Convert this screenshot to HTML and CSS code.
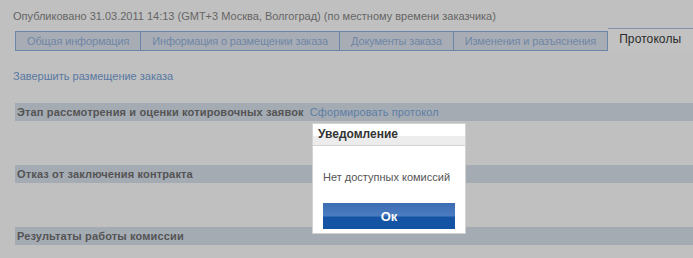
FILE: index.html
```html
<!DOCTYPE html>
<html lang="ru">
<head>
<meta charset="utf-8">
<link rel="stylesheet" href="styles.css">
</head>
<body>
<div class="page">
  <div class="published">Опубликовано 31.03.2011 14:13 (GMT+3 Москва, Волгоград) (по местному времени заказчика)</div>
  <div class="tabs">
    <span class="tab">Общая информация</span>
    <span class="tab">Информация о размещении заказа</span>
    <span class="tab">Документы заказа</span>
    <span class="tab">Изменения и разъяснения</span>
    <span class="tab active">Протоколы</span>
  </div>
  <a class="finish">Завершить размещение заказа</a>
  <div class="section">
    <div class="bar"><b>Этап рассмотрения и оценки котировочных заявок</b> <a class="barlink">Сформировать протокол</a></div>
  </div>
  <div class="section">
    <div class="bar"><b>Отказ от заключения контракта</b></div>
  </div>
  <div class="section last">
    <div class="bar"><b>Результаты работы комиссии</b></div>
  </div>
</div>
<div class="dialog">
  <div class="dlg-head">Уведомление</div>
  <div class="dlg-body">
    <div class="dlg-msg">Нет доступных комиссий</div>
    <div class="dlg-btn">Ок</div>
  </div>
</div>
</body>
</html>
```
FILE: styles.css
```css
html, body {
  margin: 0;
  padding: 0;
  background: #c0c0c0;
  font-family: "Liberation Sans", Arial, sans-serif;
  font-size: 11px;
  overflow: hidden;
}
.page {
  padding: 9px 0 0 13px;
}
.published {
  color: #656565;
  line-height: 14px;
}
.tabs {
  display: flex;
  align-items: flex-end;
  margin: 4px 0 0 2px;
  height: 24px;
  white-space: nowrap;
}
.tab {
  background: #a8adb5;
  border: 1px solid #6b86a8;
  border-left: none;
  color: #6f86a6;
  height: 18px;
  line-height: 18px;
  padding: 0 11px;
  letter-spacing: -0.15px;
}
.tab:first-child {
  border-left: 1px solid #6b86a8;
}
.tab.active {
  background: #c2c2c2;
  color: #2a2a2a;
  border-bottom: none;
  border-left: none;
  height: 22px;
  line-height: 20px;
  padding: 0 12px 0 11px;
  font-size: 12px;
  letter-spacing: 0.1px;
  border-color: #8090a5;
}
.finish {
  display: block;
  color: #5878a2;
  margin-top: 18px;
  line-height: 14px;
}
.section {
  height: 62px;
  margin-left: 2px;
}
.section.last {
  height: 18px;
}
.finish + .section {
  margin-top: 20px;
}
.bar {
  background: #a4abb3;
  height: 18px;
  line-height: 18px;
  padding-left: 2px;
  color: #555;
  white-space: nowrap;
}
.bar b {
  color: #545454;
  letter-spacing: 0.15px;
}
.barlink {
  color: #5f7ea6;
  margin-left: 3px;
  letter-spacing: 0.1px;
}
.dialog {
  position: absolute;
  left: 312px;
  top: 123px;
  width: 152px;
  height: 109px;
  background: #fff;
  border: 1px solid #d2d2d2;
}
.dlg-head {
  height: 21px;
  line-height: 20px;
  padding-left: 5px;
  font-weight: bold;
  font-size: 12px;
  color: #333;
  background: linear-gradient(#ffffff 0, #ffffff 55%, #ececec 60%, #ececec 100%);
  border-bottom: 1px solid #d4d4d4;
}
.dlg-body {
  padding: 0 10px;
}
.dlg-msg {
  color: #555;
  margin-top: 24px;
  line-height: 14px;
  white-space: nowrap;
}
.dlg-btn {
  margin-top: 19px;
  height: 26px;
  line-height: 28px;
  text-align: center;
  color: #fff;
  font-weight: bold;
  font-size: 13px;
  background: linear-gradient(#3b6cb4 0, #4c7cc0 50%, #1553a5 54%, #1452a3 100%);
}
```
